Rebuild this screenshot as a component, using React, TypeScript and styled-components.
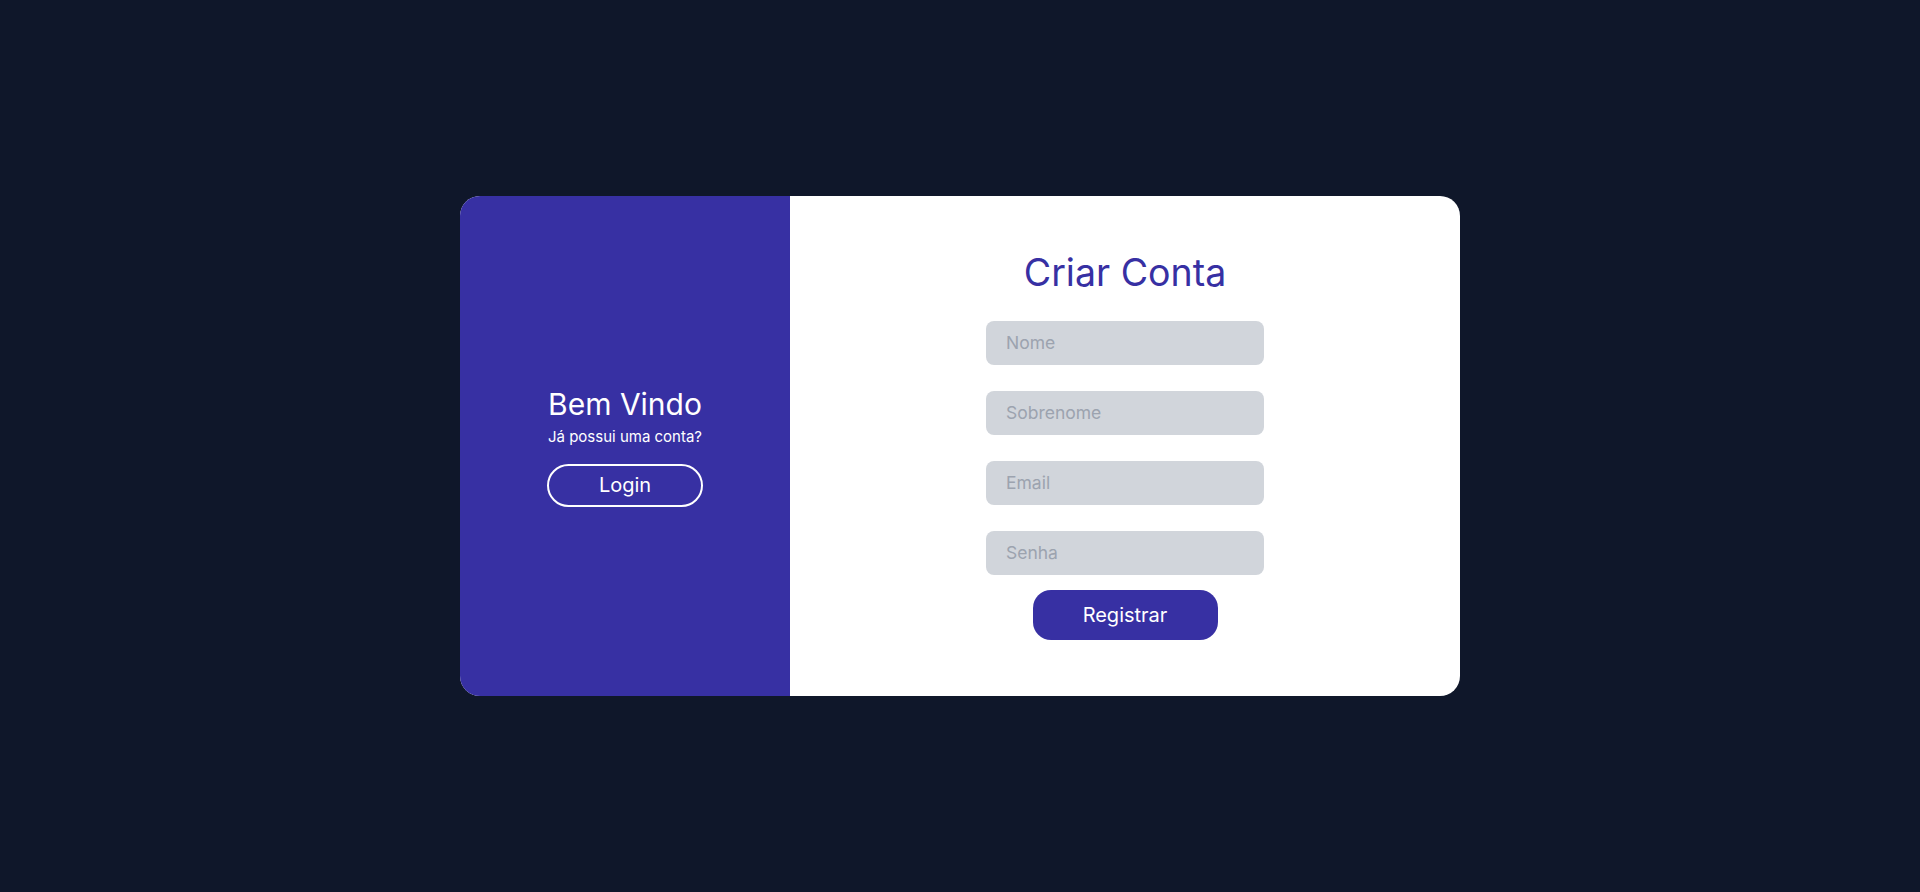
import React from "react";
import styled, { createGlobalStyle } from "styled-components";

const GlobalStyle = createGlobalStyle`
  * { box-sizing: border-box; }
  html, body { margin: 0; padding: 0; }
  body {
    background: #0f172a;
    font-family: Inter, "Noto Sans", sans-serif;
  }
`;

const Page = styled.main`
  min-height: 892px;
  display: flex;
  align-items: center;
  justify-content: center;
`;

const Card = styled.div`
  width: 1000px;
  height: 500px;
  display: flex;
  border-radius: 20px;
  overflow: hidden;
  background: #ffffff;
`;

const SidePanel = styled.section`
  width: 330px;
  background: #3730a3;
  color: #ffffff;
  display: flex;
  flex-direction: column;
  align-items: center;
  justify-content: center;
`;

const WelcomeTitle = styled.h2`
  margin: 0;
  font-size: 30px;
  line-height: 36px;
  font-weight: 400;
`;

const WelcomeText = styled.p`
  margin: 4px 0 0;
  font-size: 15px;
  line-height: 22px;
`;

const OutlineButton = styled.button`
  margin-top: 16px;
  width: 156px;
  height: 43px;
  border: 2px solid #ffffff;
  border-radius: 9999px;
  background: transparent;
  color: #ffffff;
  font-family: inherit;
  font-size: 20px;
  cursor: pointer;
`;

const FormPanel = styled.section`
  flex: 1;
  display: flex;
  flex-direction: column;
  align-items: center;
  justify-content: center;
`;

const FormTitle = styled.h1`
  margin: 0 0 28px;
  font-size: 37.5px;
  line-height: 40px;
  font-weight: 400;
  color: #3730a3;
`;

const Form = styled.form`
  display: flex;
  flex-direction: column;
  align-items: center;
`;

const Field = styled.input<{ $last?: boolean }>`
  width: 278px;
  height: 44px;
  margin-bottom: ${(p) => (p.$last ? "15px" : "26px")};
  padding: 0 20px;
  border: none;
  border-radius: 8px;
  background: #d1d5db;
  font-family: inherit;
  font-size: 17.5px;
  color: #111827;
  outline: none;
  &::placeholder {
    color: #9ca3af;
  }
`;

const SubmitButton = styled.button`
  width: 185px;
  height: 50px;
  border: none;
  border-radius: 18px;
  background: #3730a3;
  color: #ffffff;
  font-family: inherit;
  font-size: 20px;
  cursor: pointer;
`;

export default function App() {
  return (
    <>
      <GlobalStyle />
      <Page>
        <Card>
          <SidePanel>
            <WelcomeTitle>Bem Vindo</WelcomeTitle>
            <WelcomeText>Já possui uma conta?</WelcomeText>
            <OutlineButton type="button">Login</OutlineButton>
          </SidePanel>
          <FormPanel>
            <FormTitle>Criar Conta</FormTitle>
            <Form onSubmit={(e) => e.preventDefault()}>
              <Field placeholder="Nome" />
              <Field placeholder="Sobrenome" />
              <Field placeholder="Email" />
              <Field placeholder="Senha" type="password" $last />
              <SubmitButton type="submit">Registrar</SubmitButton>
            </Form>
          </FormPanel>
        </Card>
      </Page>
    </>
  );
}
